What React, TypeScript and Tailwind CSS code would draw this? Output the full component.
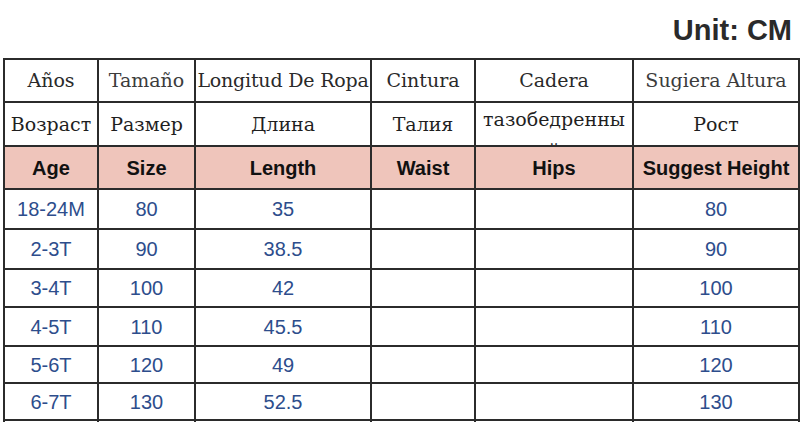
const rows = [
  ["18-24M", "80", "35", "", "", "80"],
  ["2-3T", "90", "38.5", "", "", "90"],
  ["3-4T", "100", "42", "", "", "100"],
  ["4-5T", "110", "45.5", "", "", "110"],
  ["5-6T", "120", "49", "", "", "120"],
  ["6-7T", "130", "52.5", "", "", "130"],
  ["", "", "", "", "", ""],
];

const heights = ["h-[40px]", "h-[40px]", "h-[38px]", "h-[39px]", "h-[37px]", "h-[37px]", "h-[37px]"];

const cell = "border-2 border-[#2b2b2b] p-0 text-center align-middle";

export default function App() {
  return (
    <div className="h-[422px] w-[800px] overflow-hidden bg-white">
      <div className="flex h-[58px] justify-end pr-[8px] pt-[14px]">
        <span className="font-['Liberation_Sans',Arial,sans-serif] text-[29px] font-bold leading-[32px] text-[#2a2a2a]">
          Unit: CM
        </span>
      </div>

      <div className="pl-[3px]">
        <table className="w-[795px] table-fixed border-collapse">
          <colgroup>
            <col className="w-[94px]" />
            <col className="w-[97px]" />
            <col className="w-[176px]" />
            <col className="w-[104px]" />
            <col className="w-[158px]" />
            <col className="w-[166px]" />
          </colgroup>
          <tbody>
            <tr className="h-[43px] font-['DejaVu_Serif',serif] text-[19px] text-[#2a2a2a]">
              <td className={cell}>Años</td>
              <td className={`${cell} text-[#3c3c3c]`}>Tamaño</td>
              <td className={`${cell} whitespace-nowrap tracking-[-0.2px]`}>Longitud De Ropa</td>
              <td className={cell}>Cintura</td>
              <td className={cell}>Cadera</td>
              <td className={`${cell} whitespace-nowrap text-[#3c3c3c]`}>Sugiera Altura</td>
            </tr>
            <tr className="h-[44px] font-['DejaVu_Serif',serif] text-[19px] text-[#1f1f1f]">
              <td className={cell}>Возраст</td>
              <td className={cell}>Размер</td>
              <td className={cell}>Длина</td>
              <td className={cell}>Талия</td>
              <td className={cell}>
                <div className="h-[42px] overflow-hidden">
                  <div className="pt-[1px] leading-[31px] whitespace-nowrap">
                    тазобедренны
                    <br />й
                  </div>
                </div>
              </td>
              <td className={cell}>Рост</td>
            </tr>
            <tr className="h-[43px] bg-[#efc5bb] font-['Liberation_Sans',Arial,sans-serif] text-[20px] font-bold text-[#111]">
              <td className={cell}>Age</td>
              <td className={cell}>Size</td>
              <td className={cell}>Length</td>
              <td className={cell}>Waist</td>
              <td className={cell}>Hips</td>
              <td className={`${cell} whitespace-nowrap`}>Suggest Height</td>
            </tr>
            {rows.map((r, i) => (
              <tr
                key={i}
                className={`${heights[i]} font-['Liberation_Sans',Arial,sans-serif] text-[20px] text-[#2d4d8c]`}
              >
                {r.map((v, j) => (
                  <td key={j} className={cell}>
                    {v}
                  </td>
                ))}
              </tr>
            ))}
          </tbody>
        </table>
      </div>
    </div>
  );
}
